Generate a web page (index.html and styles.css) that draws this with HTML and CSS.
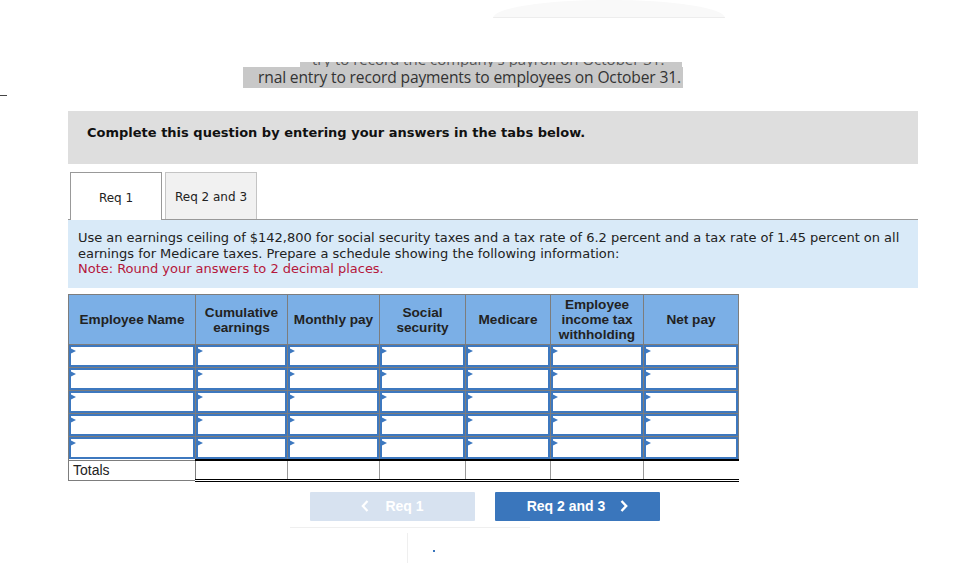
FILE: index.html
```html
<!DOCTYPE html>
<html>
<head>
<meta charset="utf-8">
<link rel="stylesheet" href="styles.css">
</head>
<body>
<div class="page">
  <div class="top">
    <div class="arc"></div>
    <div class="cutline"><span>try to record the company's payroll on October 31.</span></div>
    <div class="hlrow"><span class="hl">rnal entry to record payments to employees on October 31.</span></div>
    <div class="dash"></div>
  </div>

  <div class="prompt">Complete this question by entering your answers in the tabs below.</div>

  <div class="tabs">
    <div class="tab active">Req 1</div>
    <div class="tab">Req 2 and 3</div>
  </div>

  <div class="info">
    <p>Use an earnings ceiling of $142,800 for social security taxes and a tax rate of 6.2 percent and a tax rate of 1.45 percent on all earnings for Medicare taxes. Prepare a schedule showing the following information:</p>
    <p class="note">Note: Round your answers to 2 decimal places.</p>
  </div>

  <table class="sched">
    <colgroup>
      <col class="c1"><col class="c2"><col class="c3"><col class="c4"><col class="c5"><col class="c6"><col class="c7">
    </colgroup>
    <thead>
      <tr>
        <th>Employee Name</th>
        <th>Cumulative<br>earnings</th>
        <th>Monthly pay</th>
        <th>Social<br>security</th>
        <th>Medicare</th>
        <th>Employee<br>income tax<br>withholding</th>
        <th>Net pay</th>
      </tr>
    </thead>
    <tbody>
      <tr><td><div class="inp"></div></td><td><div class="inp"></div></td><td><div class="inp"></div></td><td><div class="inp"></div></td><td><div class="inp"></div></td><td><div class="inp"></div></td><td><div class="inp"></div></td></tr>
      <tr><td><div class="inp"></div></td><td><div class="inp"></div></td><td><div class="inp"></div></td><td><div class="inp"></div></td><td><div class="inp"></div></td><td><div class="inp"></div></td><td><div class="inp"></div></td></tr>
      <tr><td><div class="inp"></div></td><td><div class="inp"></div></td><td><div class="inp"></div></td><td><div class="inp"></div></td><td><div class="inp"></div></td><td><div class="inp"></div></td><td><div class="inp"></div></td></tr>
      <tr><td><div class="inp"></div></td><td><div class="inp"></div></td><td><div class="inp"></div></td><td><div class="inp"></div></td><td><div class="inp"></div></td><td><div class="inp"></div></td><td><div class="inp"></div></td></tr>
      <tr><td><div class="inp"></div></td><td><div class="inp"></div></td><td><div class="inp"></div></td><td><div class="inp"></div></td><td><div class="inp"></div></td><td><div class="inp"></div></td><td><div class="inp"></div></td></tr>
      <tr class="totals"><td class="tlabel">Totals</td><td></td><td></td><td></td><td></td><td></td><td></td></tr>
    </tbody>
  </table>

  <div class="nav">
    <div class="btn disabled">
      <svg class="chev" width="8" height="12" viewBox="0 0 8 12"><path d="M6.5 1 L1.8 6 L6.5 11" fill="none" stroke="#fff" stroke-width="2.2"/></svg>
      <span>Req 1</span>
    </div>
    <div class="btn primary">
      <span>Req 2 and 3</span>
      <svg class="chev r" width="8" height="12" viewBox="0 0 8 12"><path d="M1.5 1 L6.2 6 L1.5 11" fill="none" stroke="#fff" stroke-width="2.4"/></svg>
    </div>
  </div>

  <div class="foot">
    <div class="fline"></div>
    <div class="fcols">
      <div class="fvert"></div>
      <div class="fdot"></div>
    </div>
  </div>
</div>
</body>
</html>
```

FILE: styles.css
```css
* { box-sizing: border-box; }
html, body { margin: 0; padding: 0; background: #fff; }
body { font-family: "DejaVu Sans", Verdana, sans-serif; color: #222; }
.page { width: 958px; height: 577px; overflow: hidden; }

.top { height: 111px; display: flex; flex-direction: column; }
.arc {
  margin-left: 493px; width: 232px; height: 18px;
  background: #f9f9f9;
  border-radius: 50% 50% 0 0 / 100% 100% 0 0;
  border-bottom: 1px solid #ededed;
}
.cutline {
  margin-top: 44px; margin-left: 300px; height: 5px; overflow: hidden;
  display: flex; align-items: flex-end; width: 382px; background: #c8c8c8;
}
.cutline span {
  font-family: "Open Sans", sans-serif; font-size: 15px; line-height: 21px;
  color: #555; white-space: nowrap; margin-bottom: -3px; padding-left: 12px;
}
.hlrow { margin-left: 243px; height: 21px; display: flex; }
.hl {
  background: #c8c8c8; padding-left: 15px; width: 440px;
  font-family: "Open Sans", sans-serif; font-size: 15.6px; line-height: 21px; color: #333;
  white-space: nowrap; letter-spacing: -0.15px;
}
.dash { margin-top: 7px; width: 7px; height: 1px; background: #444; }

.prompt {
  margin-left: 68px; width: 850px; height: 53px;
  background: #dedede;
  font-weight: bold; font-size: 13px; color: #111;
  padding: 14px 0 0 19px; line-height: 16px;
}

.tabs { margin-left: 70px; margin-top: 8px; display: flex; gap: 3px; height: 47px; align-items: flex-end; }
.tab {
  width: 92px; height: 47px; border: 1px solid #c4c4c4; border-bottom: none;
  background: #f1f1f1; font-size: 12px; color: #222;
  display: flex; align-items: center; justify-content: center; padding-top: 1px;
}
.tab.active { background: #fff; border-color: #999; height: 48px; margin-bottom: -1px; position: relative; z-index: 1; padding-top: 3px; }

.info {
  margin-left: 68px; width: 850px; height: 69px;
  background: #d9eaf8; border-top: 1px solid #999;
  padding: 10px 0 0 10px; font-size: 13px; line-height: 15.5px; color: #222;
}
.info p { margin: 0; letter-spacing: -0.02px; }
.info .note { color: #b5173b; }

.sched {
  margin-left: 68px; margin-top: 6px; width: 670px;
  border-collapse: collapse; table-layout: fixed;
}
.c1 { width: 127px; } .c2 { width: 92px; } .c3 { width: 92px; } .c4 { width: 86px; }
.c5 { width: 85px; } .c6 { width: 93px; } .c7 { width: 95px; }
.sched th {
  height: 50px; background: #7bafe6; border: 1px solid #7d7d7d;
  font-family: "Liberation Sans", Arial, sans-serif; font-weight: bold; font-size: 13.6px;
  line-height: 15px; color: #222; padding: 0 2px; text-align: center;
}
.sched td { height: 23px; padding: 0; border: 1px solid #7d7d7d; }
.inp {
  height: 22px; border: 2px solid #3d78bf; background: #fff; position: relative;
}
.inp::before {
  content: ""; position: absolute; left: -1px; top: 1px;
  border-left: 6px solid #3d78bf; border-top: 3px solid transparent; border-bottom: 3px solid transparent;
}
.totals td {
  height: 20px; border: none; border-left: 1px solid #999;
  border-top: 2px solid #000; border-bottom: 3px double #000;
}
.totals td.tlabel {
  border: 1px solid #7d7d7d; border-top: none;
  font-family: "Liberation Sans", Arial, sans-serif; font-size: 14px; color: #222;
  padding-left: 4px; padding-top: 0;
}

.nav { margin-top: 10px; margin-left: 310px; display: flex; gap: 20px; }
.btn {
  width: 165px; height: 29px; display: flex; align-items: center; justify-content: center;
  font-family: "Liberation Sans", Arial, sans-serif; font-weight: bold; font-size: 14px; color: #fff;
  border-radius: 1px;
}
.btn.disabled { background: #d7e2f0; }
.btn.primary { background: #3a76bc; }
.chev { margin-right: 16px; }
.chev.r { margin-right: 0; margin-left: 15px; }

.foot { margin-top: 6px; margin-left: 290px; }
.fline { width: 240px; height: 1px; background: #efefef; }
.fcols { display: flex; height: 32px; padding-top: 5px; }
.fvert { margin-left: 117px; width: 1px; height: 30px; background: #efefef; }
.fdot { margin-left: 25px; margin-top: 17px; width: 2px; height: 2px; background: #3a76bc; }
```
